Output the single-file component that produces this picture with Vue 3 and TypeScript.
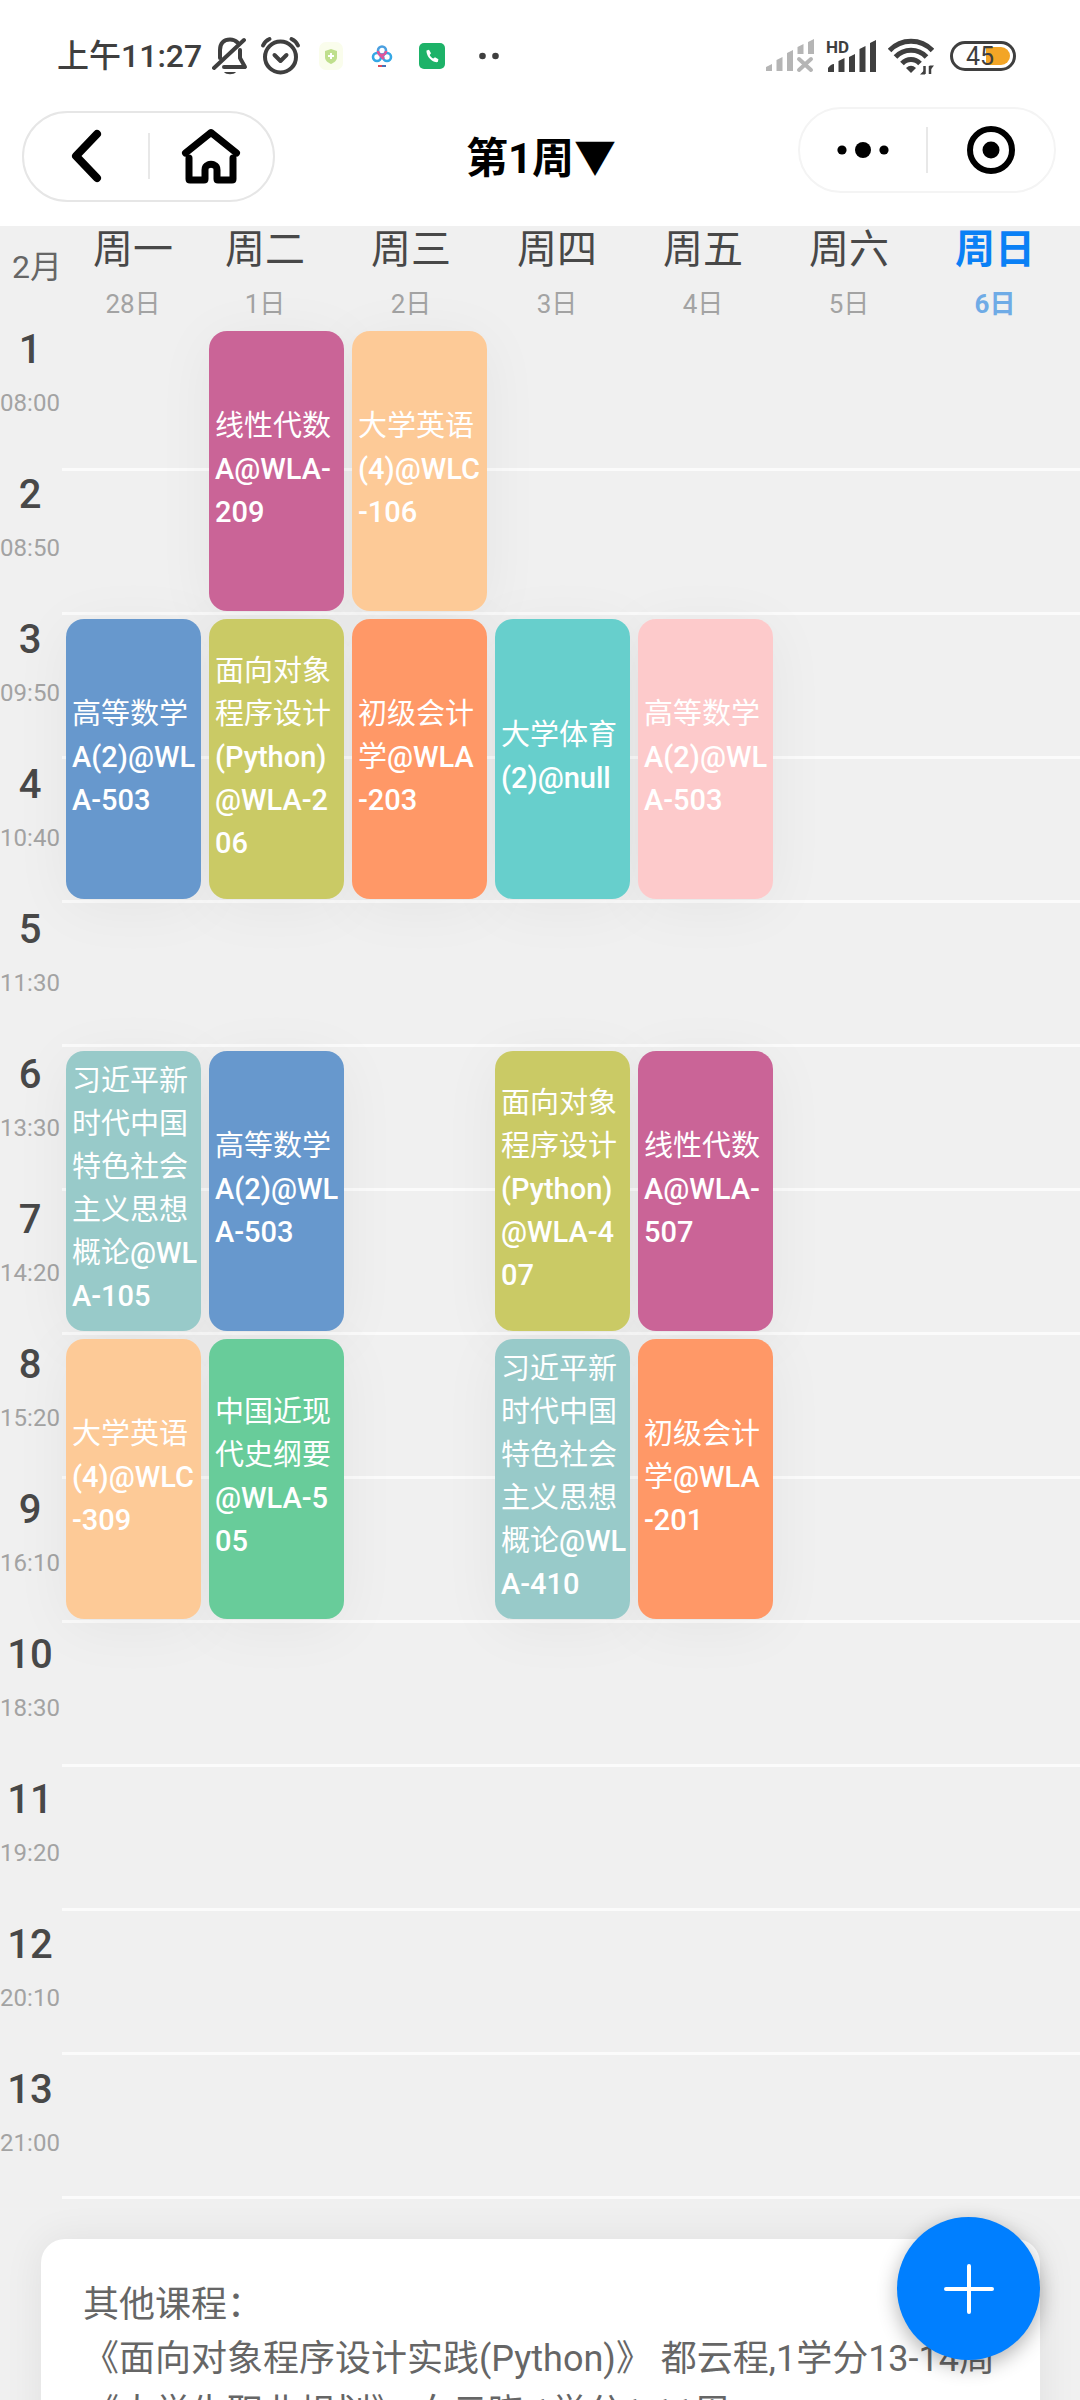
<script setup lang="ts">
interface Day {
  name: string
  date: string
  today?: boolean
}

interface Period {
  index: number
  start: string
}

interface Course {
  day: number
  from: number
  span: number
  color: string
  title: string
}

interface Run {
  text: string
  latin: boolean
}

const month = '2月'

const days: Day[] = [
  { name: '周一', date: '28日' },
  { name: '周二', date: '1日' },
  { name: '周三', date: '2日' },
  { name: '周四', date: '3日' },
  { name: '周五', date: '4日' },
  { name: '周六', date: '5日' },
  { name: '周日', date: '6日', today: true },
]

const starts = [
  '08:00', '08:50', '09:50', '10:40', '11:30', '13:30', '14:20',
  '15:20', '16:10', '18:30', '19:20', '20:10', '21:00',
]
const periods: Period[] = starts.map((start, i) => ({ index: i + 1, start }))

const magenta = '#ca6497'
const apricot = '#fdca97'
const blue = '#6798cd'
const olive = '#caca65'
const coral = '#ff9867'
const teal = '#67cfcc'
const pink = '#fdcacb'
const aqua = '#98cac9'
const green = '#68cc9a'

const courses: Course[] = [
  { day: 2, from: 1, span: 2, color: magenta, title: '线性代数\nA@WLA-\n209' },
  { day: 3, from: 1, span: 2, color: apricot, title: '大学英语\n(4)@WLC\n-106' },
  { day: 1, from: 3, span: 2, color: blue, title: '高等数学\nA(2)@WL\nA-503' },
  { day: 2, from: 3, span: 2, color: olive, title: '面向对象\n程序设计\n(Python)\n@WLA-2\n06' },
  { day: 3, from: 3, span: 2, color: coral, title: '初级会计\n学@WLA\n-203' },
  { day: 4, from: 3, span: 2, color: teal, title: '大学体育\n(2)@null' },
  { day: 5, from: 3, span: 2, color: pink, title: '高等数学\nA(2)@WL\nA-503' },
  { day: 1, from: 6, span: 2, color: aqua, title: '习近平新\n时代中国\n特色社会\n主义思想\n概论@WL\nA-105' },
  { day: 2, from: 6, span: 2, color: blue, title: '高等数学\nA(2)@WL\nA-503' },
  { day: 4, from: 6, span: 2, color: olive, title: '面向对象\n程序设计\n(Python)\n@WLA-4\n07' },
  { day: 5, from: 6, span: 2, color: magenta, title: '线性代数\nA@WLA-\n507' },
  { day: 1, from: 8, span: 2, color: apricot, title: '大学英语\n(4)@WLC\n-309' },
  { day: 2, from: 8, span: 2, color: green, title: '中国近现\n代史纲要\n@WLA-5\n05' },
  { day: 4, from: 8, span: 2, color: aqua, title: '习近平新\n时代中国\n特色社会\n主义思想\n概论@WL\nA-410' },
  { day: 5, from: 8, span: 2, color: coral, title: '初级会计\n学@WLA\n-201' },
]

const others = [
  '《面向对象程序设计实践(Python)》 都云程,1学分13-14周',
  '《大学生职业规划》 白云晓,1学分1-11周',
]

function place(c: Course) {
  return {
    gridColumn: String(c.day),
    gridRow: `${c.from} / span ${c.span}`,
    backgroundColor: c.color,
  }
}

/** Splits a line into Chinese and Latin runs, which carry different weights. */
function runs(line: string): Run[] {
  return line
    .split(/([\x20-\x7e]+)/)
    .filter((text) => text !== '')
    .map((text) => ({ text, latin: /^[\x20-\x7e]/.test(text) }))
}
</script>

<template>
  <div class="phone">
    <div class="status">
      <span class="clock">上午11:27</span>
      <svg class="bell" width="36" height="40" viewBox="0 0 36 40" fill="none" stroke="#3f3f3f" stroke-width="4" stroke-linecap="round" stroke-linejoin="round">
        <path d="M8 22V14C8 7 12 3.500 18 3.500c3 0 5.500 1 7.500 3M28 14v8l5 9H12" />
        <path d="M2 32L32 4" />
        <path d="M12 36c2 3 10 3 12 0z" fill="#3f3f3f" stroke="none" />
      </svg>
      <svg width="41" height="40" viewBox="0 0 41 40" fill="none" stroke="#3f3f3f" stroke-width="4" stroke-linecap="round" stroke-linejoin="round">
        <circle cx="20.500" cy="21" r="15.500" />
        <path d="M14.500 19l6 6 6-6" />
        <path d="M3 9.500Q5 5 9.500 3M38 9.500Q36 5 31.500 3" />
      </svg>
      <div class="apps">
        <svg width="26" height="28" viewBox="0 0 26 28">
          <rect width="24" height="28" rx="7" fill="#fafdec" />
          <path d="M12 7l6 2v6c0 4-3 5.500-6 7-3-1.500-6-3-6-7V9z" fill="#bfdf8c" />
          <path d="M12 11v6M9 14h6" stroke="#fff" stroke-width="2" />
        </svg>
        <svg width="22" height="24" viewBox="0 0 22 24" fill="none" stroke-width="2.600">
          <circle cx="11" cy="6.500" r="4" stroke="#4a9fe0" />
          <circle cx="6" cy="13" r="4" stroke="#35a8e6" />
          <circle cx="16" cy="13" r="4" stroke="#35a8e6" />
          <path d="M7 7a4 4 0 0 0 8 0M8 10l5 5" stroke="#e0559a" />
          <path d="M7 22h4" stroke="#e04b5a" stroke-width="2" />
          <path d="M11 22h4" stroke="#4472b8" stroke-width="2" />
        </svg>
        <svg width="26" height="26" viewBox="0 0 26 26">
          <rect width="26" height="26" rx="5" fill="#1db268" />
          <path d="M7.500 7.500l2.500-.8 2 3.600-1.300 1.700c.9 1.700 1.900 2.700 3.600 3.600l1.700-1.300 3.400 2-.5 2.500c-1 .8-3.400.4-6.300-1.600-3-2.200-5.300-6-5.100-9.700z" fill="#fff" />
        </svg>
      </div>
      <svg class="more" width="20" height="8" viewBox="0 0 20 8" fill="#3f3f3f">
        <circle cx="3.500" cy="4" r="3.300" />
        <circle cx="16.500" cy="4" r="3.300" />
      </svg>

      <div class="radio">
        <svg width="48" height="34" viewBox="0 0 48 34" fill="#b5b5b5">
          <path d="M0 32v-4l6-3v7zM10.500 32V21l6-3v14zM21 32V14l6-3v21zM31.500 15V8l6-3v10zM42 15V3l6-3v15z" />
          <path d="M33 20l12 11M45 20L33 31" stroke="#b5b5b5" stroke-width="4" stroke-linecap="round" />
        </svg>
        <svg width="50" height="36" viewBox="0 0 50 36" fill="#3f3f3f">
          <text class="hd" x="0" y="15">HD</text>
          <path d="M2 34v-4q3-4 6-4v8zM12.500 34V23l6-3v14zM23 34V19l6-3v18zM33.500 34V11l6-3v26zM44 34V5l6-3v32z" />
        </svg>
        <svg class="wifi" width="46" height="38" viewBox="0 0 46 38" fill="none" stroke="#3f3f3f" stroke-width="5">
          <path d="M1.500 13.500C13 1 33 1 44.500 13.500" />
          <path d="M7.500 20C16 11 30 11 38.500 20" />
          <path d="M14 26.500c5-5.500 13-5.500 18 0" />
          <path d="M23 36l-5-5q5-4.500 10 0z" fill="#3f3f3f" stroke="none" />
          <path d="M36.500 29v8M42 37v-8" stroke-width="2.500" />
          <path d="M37 37.500h-5l5-5zM41.500 28.500h4.500l-4 5z" fill="#3f3f3f" stroke="none" />
        </svg>
        <svg width="66" height="30" viewBox="0 0 66 30">
          <path d="M36 6h15a9 9 0 0 1 0 18H36z" fill="#f3a526" />
          <rect x="1.500" y="1.500" width="63" height="27" rx="13.500" fill="none" stroke="#3f3f3f" stroke-width="3" />
          <text class="level" x="16" y="24">45</text>
        </svg>
      </div>
    </div>

    <header class="nav">
      <div class="pill left">
        <button type="button" aria-label="返回">
          <svg width="32" height="54" viewBox="0 0 32 54" fill="none" stroke="#000" stroke-width="8" stroke-linecap="round" stroke-linejoin="round">
            <path d="M27 5L6 27l21 22" />
          </svg>
        </button>
        <i class="rule"></i>
        <button type="button" aria-label="主页">
          <svg width="60" height="56" viewBox="0 0 60 56" fill="none" stroke="#000" stroke-width="7" stroke-linecap="round" stroke-linejoin="round">
            <path d="M4.500 25L30 4.500 55.500 25" />
            <path d="M8 30v21q0 1 1 1h14q1 0 1-1v-9q0-4 3-5 3-1.500 6 0 3 1 3 5v9q0 1 1 1h14q1 0 1-1V30" />
          </svg>
        </button>
      </div>
      <button type="button" class="week">第1周▼</button>
      <div class="pill right">
        <button type="button" aria-label="更多">
          <svg width="52" height="18" viewBox="0 0 52 18">
            <circle cx="5" cy="9" r="4.600" />
            <circle cx="26" cy="9" r="8" />
            <circle cx="47" cy="9" r="4.600" />
          </svg>
        </button>
        <i class="rule"></i>
        <button type="button" aria-label="关闭">
          <svg width="48" height="48" viewBox="0 0 48 48">
            <circle cx="24" cy="24" r="21" fill="none" stroke="#000" stroke-width="6" />
            <circle cx="24" cy="24" r="8.500" />
          </svg>
        </button>
      </div>
    </header>

    <main class="board">
      <div class="days">
        <div class="month">{{ month }}</div>
        <div v-for="d in days" :key="d.name" class="day" :class="{ today: d.today }">
          <div class="name">{{ d.name }}</div>
          <div class="date">{{ d.date }}</div>
        </div>
      </div>

      <div class="timetable">
        <div class="periods">
          <div v-for="p in periods" :key="p.index" class="period">
            <div class="index">{{ p.index }}</div>
            <div class="start">{{ p.start }}</div>
          </div>
        </div>
        <div class="grid">
          <div v-for="(c, i) in courses" :key="i" class="course" :style="place(c)">
            <div v-for="(line, k) in c.title.split('\n')" :key="k" class="line"><span v-for="(r, j) in runs(line)" :key="j" :class="{ latin: r.latin }">{{ r.text }}</span></div>
          </div>
        </div>
      </div>

      <section class="others">
        <p>其他课程：</p>
        <p v-for="o in others" :key="o" class="item">{{ o }}</p>
      </section>
    </main>

    <button type="button" class="add" aria-label="添加课程">
      <svg width="50" height="50" viewBox="0 0 50 50" stroke="#fff" stroke-width="4" stroke-linecap="round">
        <path d="M25 2v46M2 25h46" />
      </svg>
    </button>
  </div>
</template>

<style>
body {
  margin: 0;
  background: #f0f0f0;
}
</style>

<style scoped>
.phone {
  position: relative;
  display: flex;
  flex-direction: column;
  height: 100vh;
  overflow: hidden;
  background: #f0f0f0;
  color: #484848;
  font-family: Roboto, "Noto Sans CJK SC", sans-serif;
}

button {
  display: flex;
  align-items: center;
  justify-content: center;
  margin: 0;
  padding: 0;
  border: 0;
  background: none;
  color: inherit;
  font-family: inherit;
}

p {
  margin: 0;
}

svg {
  display: block;
  flex: none;
}

.status {
  display: flex;
  flex: none;
  align-items: center;
  height: 96px;
  padding: 8px 64px 0 57px;
  background: #fff;
}

.clock {
  color: #3f3f3f;
  font-size: 32px;
  font-weight: 500;
  line-height: 40px;
  white-space: nowrap;
}

.bell {
  margin: 0 12px 0 10px;
}

.apps {
  display: flex;
  align-items: center;
  gap: 26px;
  margin-left: 18px;
}

.more {
  margin-left: 34px;
}

.radio {
  display: flex;
  align-items: center;
  gap: 12px;
  margin-left: auto;
}

.wifi {
  margin-right: 4px;
}

.hd {
  font-size: 17px;
  font-weight: 700;
}

.level {
  fill: #3f3f3f;
  font-size: 25px;
}

.nav {
  display: grid;
  grid-template-columns: 1fr auto 1fr;
  flex: none;
  align-items: center;
  height: 104px;
  padding: 0 24px 18px 22px;
  background: #fff;
}

.pill {
  display: flex;
  align-items: center;
  box-sizing: border-box;
  border: 2px solid #e6e6e6;
  border-radius: 46px;
}

.pill button {
  flex: 1;
  height: 80px;
}

.left {
  width: 253px;
  height: 91px;
}

.right {
  justify-self: end;
  width: 258px;
  height: 86px;
  margin-bottom: 12px;
  border-color: #f4f4f4;
}

.rule {
  width: 2px;
  height: 46px;
  background: #e8e8e8;
}

.week {
  margin: 6px 0 0 4px;
  color: #000;
  font-size: 42px;
  font-weight: 700;
  line-height: 60px;
  white-space: nowrap;
}

.board {
  flex: 1;
  min-height: 0;
  overflow-y: auto;
  scrollbar-width: none;
}

.days {
  display: grid;
  grid-template-columns: 74px 118px repeat(6, 1fr);
  height: 101px;
  padding-right: 12px;
  text-align: center;
}

.month {
  margin-top: 20px;
  color: #666;
  font-size: 32px;
  line-height: 42px;
}

.name {
  font-size: 40px;
  line-height: 48px;
}

.date {
  margin-top: 10px;
  color: #a3a3a3;
  font-size: 26px;
  line-height: 40px;
}

.today .name {
  color: #0a80f5;
  font-weight: 700;
}

.today .date {
  color: #6fabe6;
  font-weight: 700;
}

.timetable {
  display: grid;
  grid-template-columns: 62px 1fr;
  align-items: start;
}

.period {
  height: 145px;
  padding-right: 2px;
  text-align: center;
}

.index {
  font-size: 40px;
  font-weight: 500;
  line-height: 46px;
}

.start {
  margin-top: 12px;
  color: #a3a3a3;
  font-size: 24px;
  line-height: 36px;
}

.grid {
  display: grid;
  grid-template-columns: repeat(7, 1fr);
  grid-template-rows: repeat(13, 144px);
  padding-right: 17px;
  background: repeating-linear-gradient(transparent 0 141px, #fbfbfb 141px 144px);
  isolation: isolate;
}

.course {
  position: relative;
  display: flex;
  flex-direction: column;
  justify-content: center;
  margin: 4px;
  padding: 0 0 4px 6px;
  border-radius: 18px;
  color: #fff;
}

/* The shadow sits below every card, so that neighbours keep a flat colour. */
.course::before {
  position: absolute;
  z-index: -1;
  inset: 0;
  border-radius: 18px;
  box-shadow: 0 8px 60px rgba(0, 0, 0, 0.05);
  content: "";
}

.line {
  font-size: 29px;
  line-height: 43px;
  white-space: nowrap;
}

.latin {
  font-weight: 500;
}

.others {
  margin: 27px 40px 0 41px;
  padding: 39px 42px 60px;
  border-radius: 24px;
  background: #fff;
  box-shadow: 0 0 40px rgba(0, 0, 0, 0.07);
  color: #666;
  font-size: 36px;
  line-height: 54px;
}

.item {
  white-space: nowrap;
}

.add {
  position: absolute;
  right: 40px;
  bottom: 40px;
  width: 143px;
  height: 143px;
  border-radius: 50%;
  background: #007fff;
  box-shadow: 0 6px 20px rgba(0, 0, 0, 0.3);
}
</style>
